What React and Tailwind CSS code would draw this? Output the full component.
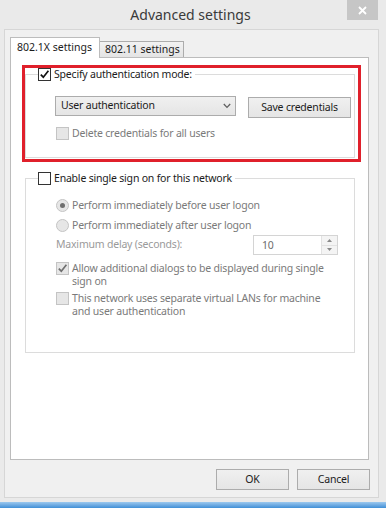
import React from 'react';

const font = "[font-family:'Noto_Sans',sans-serif]";

const Check = ({ checked, disabled }) => (
    <span
        className={
            'flex w-[13px] h-[13px] shrink-0 items-center justify-center border ' +
            (disabled ? 'border-[#c4c4c4] bg-[#e6e6e6]' : 'border-[#333333] bg-white')
        }
    >
        {checked && (
            <svg width="11" height="11" viewBox="0 0 11 11">
                <path
                    d="M1.8 5.6 L4.3 8.2 L9.4 1.8"
                    fill="none"
                    stroke={disabled ? '#6f6f6f' : '#111111'}
                    strokeWidth="1.7"
                />
            </svg>
        )}
    </span>
);

const Radio = ({ checked }) => (
    <span className="flex w-[13px] h-[13px] shrink-0 items-center justify-center rounded-full border border-[#c4c4c4] bg-[#e6e6e6]">
        {checked && <span className="w-[5px] h-[5px] rounded-full bg-[#6f6f6f]" />}
    </span>
);

const Option = ({ control, children, className = '' }) => (
    <div className={'flex items-start ' + className}>
        {control}
        <span className="ml-[3px] leading-[13px] whitespace-nowrap text-[#7a7a7a]">{children}</span>
    </div>
);

const Button = ({ children, className = '' }) => (
    <button className={'h-[21px] border border-[#acacac] bg-gradient-to-b from-[#f0f0f0] to-[#e5e5e5] text-[#1b1b1b] leading-[19px] ' + className}>
        {children}
    </button>
);

export default function App() {
    return (
        <div className={`w-[386px] h-[508px] bg-[#eaeaea] flex flex-col text-[10.5px] tracking-[-0.2px] ${font}`}>
            {/* title bar */}
            <div className="flex h-[29px] shrink-0">
                <div className="flex-1 text-center leading-[29px] text-[14px] tracking-normal text-[#3a3a3a] pl-[34px]">
                    Advanced settings
                </div>
                <div className="flex w-[31px] h-[20px] mr-[8px] items-center justify-center bg-[#c6c6c6]">
                    <svg width="9" height="9" viewBox="0 0 9 9">
                        <path d="M1 1 L8 8 M8 1 L1 8" stroke="#ffffff" strokeWidth="1.8" />
                    </svg>
                </div>
            </div>

            {/* client area */}
            <div className="ml-[4px] w-[375px] h-[469px] border border-[#d6d6d6] bg-[#f0f0f0] pl-[5px] pt-[7px]">
                <div className="flex items-end tracking-normal">
                    <div className="relative z-10 w-[90px] h-[21px] -mb-[1px] border border-b-0 border-[#bcbcbc] bg-white pl-[6px] pt-[2px] text-[#1b1b1b]">
                        802.1X settings
                    </div>
                    <div className="w-[84px] h-[16px] border border-l-0 border-b-0 border-[#acacac] bg-gradient-to-b from-[#f2f2f2] to-[#e4e4e4] pl-[5px] leading-[15px] text-[#1b1b1b]">
                        802.11 settings
                    </div>
                </div>

                <div className="w-[359px] h-[403px] border border-[#bcbcbc] bg-white pt-[7px]">
                    {/* highlighted group */}
                    <div className="ml-[11px] w-[339px] border-[3px] border-[#e0202b]">
                        <fieldset className="w-[330px] border border-[#dcdcdc] pb-[17px]">
                            <legend className="ml-[12px] pr-[3px] h-[13px] flex items-center text-[#1b1b1b]">
                                <Check checked />
                                <span className="ml-[3px] leading-[13px]">Specify authentication mode:</span>
                            </legend>
                            <div className="pl-[29px]">
                                <div className="flex items-start mt-[15px]">
                                    <div className="flex w-[181px] h-[20px] items-center justify-between border border-[#acacac] bg-gradient-to-b from-[#f0f0f0] to-[#e5e5e5] pl-[5px] pr-[4px] text-[#1b1b1b]">
                                        <span>User authentication</span>
                                        <svg width="8" height="6" viewBox="0 0 8 6">
                                            <path d="M0.8 1 L4 4.4 L7.2 1" fill="none" stroke="#606060" strokeWidth="1.3" />
                                        </svg>
                                    </div>
                                    <Button className="ml-[12px] mt-[1px] w-[103px]">Save credentials</Button>
                                </div>
                                <Option className="mt-[9px] ml-[1px]" control={<Check disabled />}>
                                    Delete credentials for all users
                                </Option>
                            </div>
                        </fieldset>
                        <div className="h-[1px]" />
                    </div>

                    {/* single sign on group */}
                    <fieldset className="ml-[14px] mt-[10px] w-[330px] border border-[#dcdcdc] pb-[34px]">
                        <legend className="ml-[12px] pr-[3px] h-[13px] flex items-center text-[#1b1b1b]">
                            <Check />
                            <span className="ml-[3px] leading-[13px]">Enable single sign on for this network</span>
                        </legend>
                        <div className="pl-[30px]">
                            <Option className="mt-[14px]" control={<Radio checked />}>
                                Perform immediately before user logon
                            </Option>
                            <Option className="mt-[7px]" control={<Radio />}>
                                Perform immediately after user logon
                            </Option>
                            <div className="flex w-[282px] h-[20px] mt-[3px] items-center justify-between">
                                <span className="text-[#9a9a9a]">Maximum delay (seconds):</span>
                                <div className="flex w-[85px] h-[20px] border border-[#d4d4d4] bg-white">
                                    <span className="flex-1 pl-[8px] leading-[19px] text-[#6d6d6d]">10</span>
                                    <div className="flex flex-col w-[16px] border-l border-[#e2e2e2] bg-[#f4f4f4]">
                                        <div className="flex flex-1 items-center justify-center border-b border-[#e2e2e2]">
                                            <svg width="5" height="3" viewBox="0 0 5 3">
                                                <path d="M0 3 L2.5 0 L5 3 Z" fill="#8a8a8a" />
                                            </svg>
                                        </div>
                                        <div className="flex flex-1 items-center justify-center">
                                            <svg width="5" height="3" viewBox="0 0 5 3">
                                                <path d="M0 0 L2.5 3 L5 0 Z" fill="#8a8a8a" />
                                            </svg>
                                        </div>
                                    </div>
                                </div>
                            </div>
                            <Option className="mt-[7px]" control={<Check checked disabled />}>
                                Allow additional dialogs to be displayed during single
                                <br />
                                sign on
                            </Option>
                            <Option className="mt-[4px]" control={<Check disabled />}>
                                This network uses separate virtual LANs for machine
                                <br />
                                and user authentication
                            </Option>
                        </div>
                    </fieldset>
                </div>

                <div className="flex w-[360px] justify-end gap-[8px] mt-[9px]">
                    <Button className="w-[73px]">OK</Button>
                    <Button className="w-[73px]">Cancel</Button>
                </div>
            </div>

            <div className="mt-[4px] h-[6px] bg-gradient-to-b from-[#9cc8ee] to-[#3f8fd6]" />
        </div>
    );
}
